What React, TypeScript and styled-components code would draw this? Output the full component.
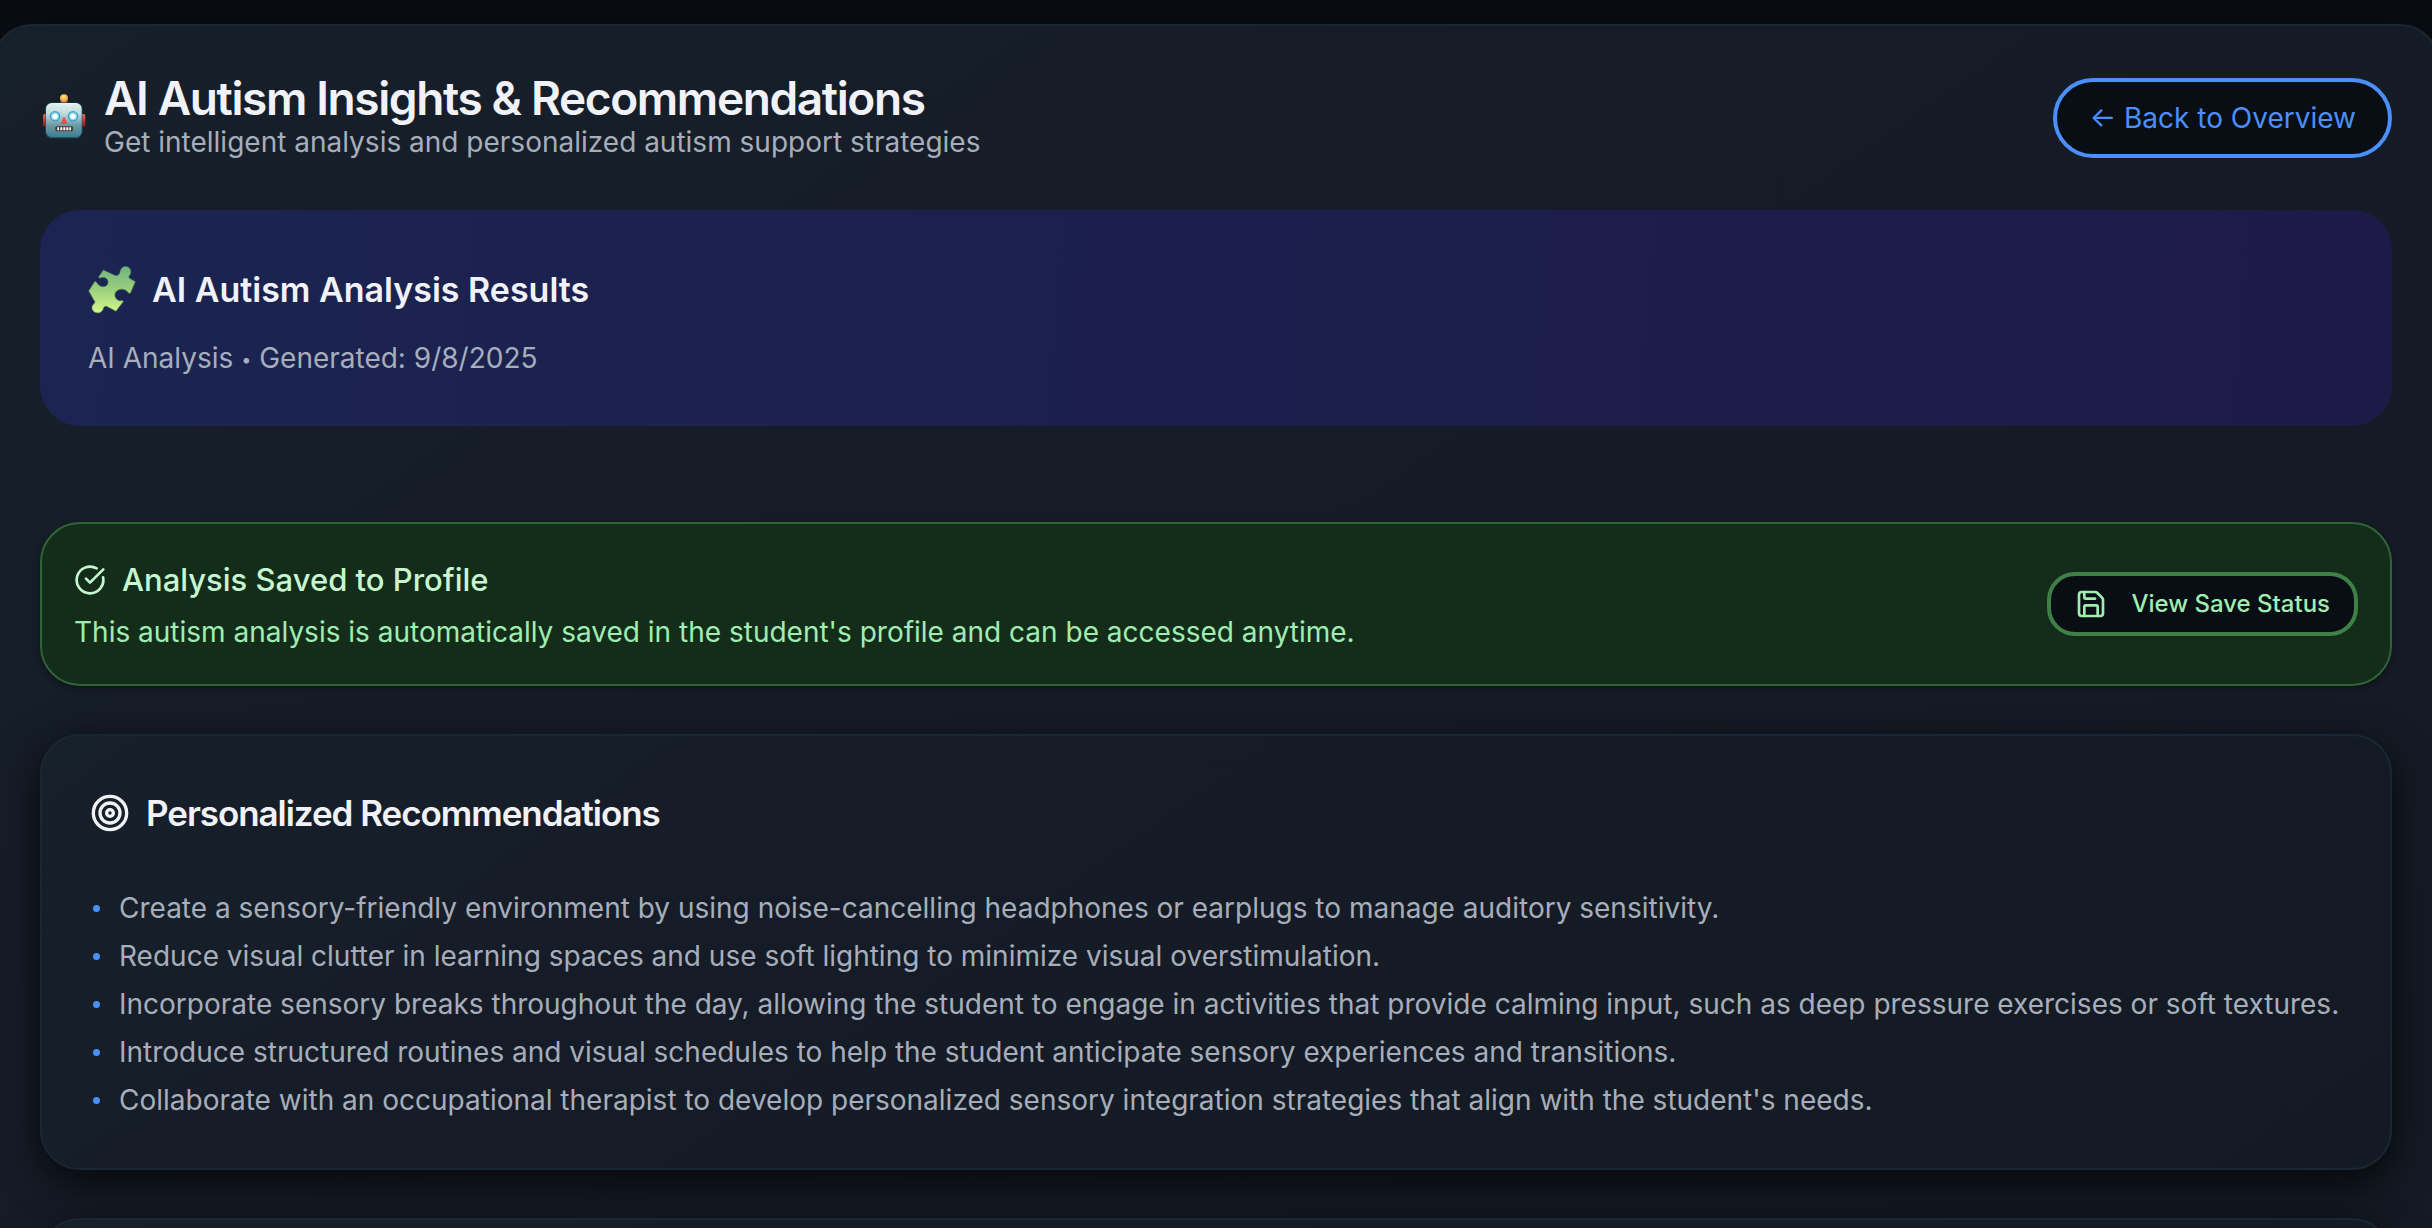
import React from "react";
import styled, { createGlobalStyle } from "styled-components";
import { CircleCheckBig, Save, Target } from "lucide-react";

const GlobalStyle = createGlobalStyle`
  * { box-sizing: border-box; }
  body {
    margin: 0;
    background: #090c11;
    color: #f1f2f7;
    font-family: Inter, "Liberation Sans", sans-serif;
    font-size: 28px;
    line-height: 40px;
    overflow-x: hidden;
  }
  h1, h2, h3, p, ul { margin: 0; padding: 0; }
`;

const Viewport = styled.div`
  height: 100vh;
  overflow: hidden;
  padding-top: 24px;
`;

const Shell = styled.main`
  margin: 0 -8px;
  padding: 48px 46px;
  border: 2px solid #1a2632;
  border-radius: 40px;
  background: linear-gradient(145deg, #16202a 0%, #161c27 30%, #131a23 100%);
  box-shadow: 0 16px 64px rgba(0, 0, 0, 0.4);
`;

const Header = styled.header`
  display: flex;
  align-items: center;
  justify-content: space-between;
  margin-bottom: 48px;
`;

const Brand = styled.div`
  display: flex;
  align-items: center;
  gap: 16px;
`;

const Title = styled.h1`
  font-size: 46px;
  line-height: 48px;
  font-weight: 600;
  letter-spacing: -0.03em;
`;

const Muted = styled.p`
  color: #a7aebb;
`;

const SmallDot = styled.span`
  font-size: 18px;
  line-height: 28px;
  vertical-align: 2px;
`;

const PillButton = styled.button`
  display: inline-flex;
  align-items: center;
  height: 80px;
  padding: 0 32px;
  border: 4px solid #4b8ffa;
  border-radius: 40px;
  background: #090d14;
  color: #4b8ffa;
  font: 400 28px/40px Inter, "Liberation Sans", sans-serif;
`;

const SaveButton = styled(PillButton)`
  height: 64px;
  padding: 0 24px;
  gap: 24px;
  border-color: #3f8047;
  border-radius: 28px;
  color: #a0edb2;
  font-size: 24px;
  font-weight: 500;
`;

const Banner = styled.section`
  padding: 48px;
  border-radius: 40px;
  background: linear-gradient(95deg, #1b2452 0%, #1c1f4d 50%, #1e1a48 100%);
  margin-bottom: 96px;
`;

const BannerHead = styled.div`
  display: flex;
  align-items: center;
  gap: 16px;
  height: 64px;
  margin-bottom: 16px;
`;

const Heading = styled.h2`
  font-size: 34px;
  line-height: 48px;
  font-weight: 600;
`;

const Saved = styled.section`
  display: flex;
  align-items: center;
  justify-content: space-between;
  padding: 32px;
  border: 2px solid #2f6438;
  border-radius: 40px;
  background: #142d1a;
  color: #a0edb2;
  box-shadow: 0 2px 6px rgba(0, 0, 0, 0.4);
  margin-bottom: 48px;
`;

const SavedHead = styled.h3`
  display: flex;
  align-items: center;
  gap: 16px;
  margin-bottom: 8px;
  color: #c6f7d0;
  font-size: 31px;
  line-height: 48px;
  font-weight: 500;
`;

const Card = styled.section`
  min-height: 436px;
  padding: 46px 48px;
  border: 2px solid #1a2632;
  border-radius: 40px;
  background: linear-gradient(145deg, #16202a 0%, #161c27 30%, #131a23 100%);
  box-shadow: 0 12px 40px rgba(0, 0, 0, 0.75);
  margin-bottom: 48px;
`;

const CardHead = styled(Heading)`
  display: flex;
  align-items: center;
  gap: 16px;
  height: 62px;
  margin-bottom: 42px;
  font-size: 35px;
  letter-spacing: -0.03em;
`;

const List = styled.ul`
  display: flex;
  flex-direction: column;
  gap: 4px;
  list-style: none;
  color: #a7aebb;
`;

const Item = styled.li`
  display: flex;
  align-items: center;
  gap: 16px;
  line-height: 44px;
`;

const Bullet = styled.span`
  flex: none;
  width: 7px;
  height: 7px;
  margin: 0 3px;
  border-radius: 50%;
  background: #4b8ffa;
`;

const recommendations = [
  "Create a sensory-friendly environment by using noise-cancelling headphones or earplugs to manage auditory sensitivity.",
  "Reduce visual clutter in learning spaces and use soft lighting to minimize visual overstimulation.",
  "Incorporate sensory breaks throughout the day, allowing the student to engage in activities that provide calming input, such as deep pressure exercises or soft textures.",
  "Introduce structured routines and visual schedules to help the student anticipate sensory experiences and transitions.",
  "Collaborate with an occupational therapist to develop personalized sensory integration strategies that align with the student's needs.",
];

const Robot = () => (
  <svg width="48" height="48" viewBox="12 30 144 144" aria-hidden="true">
    <defs>
      <linearGradient id="face" x1="0" y1="0" x2="0" y2="1">
        <stop offset="0" stopColor="#e2f5f1" />
        <stop offset="0.35" stopColor="#b9d6d6" />
        <stop offset="0.65" stopColor="#6b9ba6" />
        <stop offset="1" stopColor="#3f7f8f" />
      </linearGradient>
      <linearGradient id="ear" x1="0" y1="0" x2="0" y2="1">
        <stop offset="0" stopColor="#f0685f" />
        <stop offset="1" stopColor="#8c1717" />
      </linearGradient>
      <radialGradient id="bulb" cx="0.45" cy="0.3" r="0.7">
        <stop offset="0" stopColor="#ffe98a" />
        <stop offset="1" stopColor="#f28a17" />
      </radialGradient>
    </defs>
    <rect x="21" y="90" width="14" height="38" rx="5" fill="url(#ear)" />
    <rect x="134" y="90" width="14" height="38" rx="5" fill="url(#ear)" />
    <path d="M70 60q0-10 14-10t14 10z" fill="#5d4a86" />
    <circle cx="84" cy="43" r="12" fill="url(#bulb)" />
    <rect x="28" y="56" width="111" height="107" rx="19" fill="#24515e" />
    <rect x="30" y="57" width="107" height="102" rx="17" fill="url(#face)" />
    <circle cx="57" cy="97" r="16" fill="#3fa0c4" />
    <circle cx="57" cy="97" r="12" fill="#8fd6ea" />
    <circle cx="57" cy="97" r="8" fill="#fff" />
    <circle cx="111" cy="97" r="16" fill="#3fa0c4" />
    <circle cx="111" cy="97" r="12" fill="#8fd6ea" />
    <circle cx="111" cy="97" r="8" fill="#fff" />
    <path d="M84 97l11 23H74z" fill="#dd5450" />
    <rect x="58" y="127" width="53" height="15" rx="4" fill="#4b3a36" />
    <path d="M64 130h5v9h-5zM73 130h6v9h-6zM82 130h6v9h-6zM91 130h6v9h-6zM100 130h5v9h-5z" fill="#fff" />
  </svg>
);

const Puzzle = () => (
  <svg width="48" height="48" viewBox="24 24 144 144" aria-hidden="true">
    <defs>
      <linearGradient id="piece" x1="0" y1="0" x2="0" y2="1">
        <stop offset="0" stopColor="#6fb383" />
        <stop offset="0.5" stopColor="#9ccf7c" />
        <stop offset="1" stopColor="#d6fa8e" />
      </linearGradient>
    </defs>
    <path
      d="M70 36L104 52C112 55 119 50 120 42C122 28 134 22 144 27C154 32 155 46 148 53C145 57 147 60 151 62L166 71L152 104C149 108 145 106 141 100C133 90 112 92 106 104C101 118 112 130 124 128C129 127 131 128 129 132L108 160L82 146C76 143 71 146 70 152C67 164 54 168 43 162C33 155 34 143 42 137C46 133 45 130 42 127L26 99L43 72C45 69 48 71 52 76C58 88 78 90 83 78C88 66 78 56 64 59C57 61 54 59 57 55Z"
      fill="url(#piece)"
      stroke="#4a7a4a"
      strokeWidth="2"
      strokeLinejoin="round"
    />
  </svg>
);

export default function App() {
  return (
    <Viewport>
      <GlobalStyle />
      <Shell>
        <Header>
          <Brand>
            <Robot />
            <div>
              <Title>AI Autism Insights &amp; Recommendations</Title>
              <Muted>Get intelligent analysis and personalized autism support strategies</Muted>
            </div>
          </Brand>
          <PillButton type="button">← Back to Overview</PillButton>
        </Header>
        <Banner>
          <BannerHead>
            <Puzzle />
            <Heading>AI Autism Analysis Results</Heading>
          </BannerHead>
          <Muted>AI Analysis <SmallDot>•</SmallDot> Generated: 9/8/2025</Muted>
        </Banner>
        <Saved>
          <div>
            <SavedHead><CircleCheckBig size={32} />Analysis Saved to Profile</SavedHead>
            <p>This autism analysis is automatically saved in the student's profile and can be accessed anytime.</p>
          </div>
          <SaveButton type="button"><Save size={32} />View Save Status</SaveButton>
        </Saved>
        <Card>
          <CardHead><Target size={40} />Personalized Recommendations</CardHead>
          <List>
            {recommendations.map((text) => <Item key={text}><Bullet />{text}</Item>)}
          </List>
        </Card>
        <Card />
      </Shell>
    </Viewport>
  );
}
